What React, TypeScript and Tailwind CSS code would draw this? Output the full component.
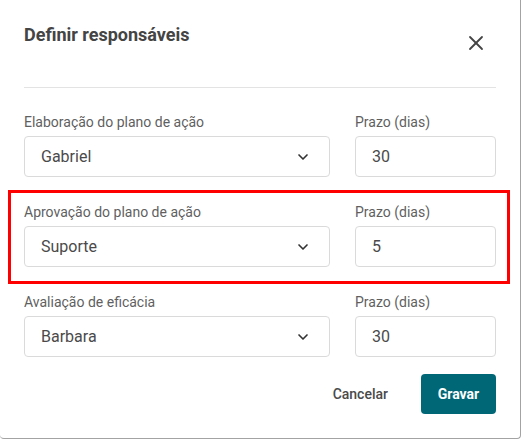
import { X, ChevronDown } from "lucide-react";

type Row = { label: string; value: string; days: string; highlight?: boolean };

const rows: Row[] = [
  { label: "Elaboração do plano de ação", value: "Gabriel", days: "30" },
  { label: "Aprovação do plano de ação", value: "Suporte", days: "5", highlight: true },
  { label: "Avaliação de eficácia", value: "Barbara", days: "30" },
];

const App = () => {
  return (
    <div
      className="w-[521px] h-[439px] bg-white border-r border-b border-[#a3a3a3] rounded-b-[4px] overflow-hidden"
      style={{ fontFamily: "Roboto, 'Liberation Sans', sans-serif" }}
    >
      <div className="px-6">
        {/* Header */}
        <div className="flex justify-between items-start h-[88px] border-b border-[#e3e3e3]">
          <h2 className="pt-[23px] text-[18px] leading-6 font-bold text-[#444]">
            Definir responsáveis
          </h2>
          <button className="mt-[31px] mr-[8px] text-[#444]">
            <X size={24} strokeWidth={1.8} />
          </button>
        </div>

        {/* Fields */}
        <div className="pt-6 flex flex-col gap-[25px]">
          {rows.map((row) => (
            <div key={row.label} className="relative grid grid-cols-[306px_1fr] gap-[25px]">
              {row.highlight && (
                <span className="absolute -left-4 -right-[14px] -top-3 -bottom-[17px] border-[3px] border-[#ff0000] pointer-events-none" />
              )}
              <div>
                <p className="text-[14px] leading-5 text-[#5f5f5f] mb-1">{row.label}</p>
                <div className="h-[41px] border border-[#dadada] rounded-[4px] flex items-center justify-between pl-4 pr-[18px]">
                  <span className="text-[16px] text-[#4a4a4a]">{row.value}</span>
                  <ChevronDown size={16} strokeWidth={2.5} className="text-[#333]" />
                </div>
              </div>
              <div>
                <p className="text-[14px] leading-5 text-[#5f5f5f] mb-1">Prazo (dias)</p>
                <div className="h-[41px] border border-[#dadada] rounded-[4px] flex items-center pl-4">
                  <span className="text-[16px] text-[#4a4a4a]">{row.days}</span>
                </div>
              </div>
            </div>
          ))}
        </div>

        {/* Actions */}
        <div className="mt-[17px] flex justify-end items-center gap-[17px]">
          <button className="px-4 h-10 text-[14px] font-medium text-[#4a4a4a]">Cancelar</button>
          <button className="w-[75px] h-10 rounded-[4px] bg-[#006776] text-white text-[14px] font-bold">
            Gravar
          </button>
        </div>
      </div>
    </div>
  );
};

export default App;
